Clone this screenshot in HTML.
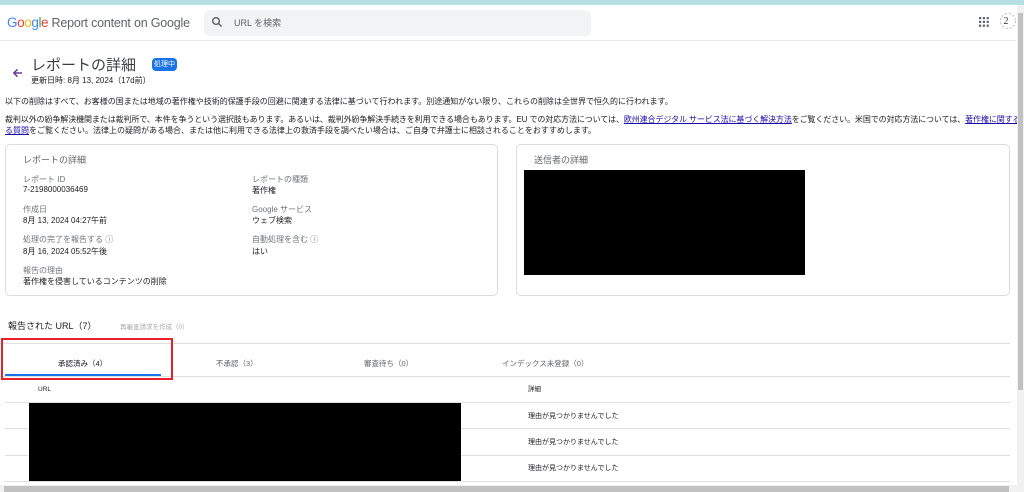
<!DOCTYPE html>
<html><head><meta charset="utf-8"><style>
*{margin:0;padding:0;box-sizing:border-box}
body{width:1024px;height:492px;overflow:hidden;background:#fff;position:relative;font-family:"Liberation Sans","Noto Sans CJK JP",sans-serif;color:#202124}
.a{position:absolute;white-space:nowrap}
.s8{font-size:8px}
.g{color:#5f6368}
.lnk{color:#1a0dab;text-decoration:underline}
.card{position:absolute;border:1px solid #dadce0;border-radius:5px}
.hl{position:absolute;height:1px;background:#e0e0e0}
.lab{font-size:8px;color:#70757a}
.val{font-size:8px;color:#202124}
</style></head><body>
<div class="a" style="left:0;top:0;width:1024px;height:5px;background:#b7dfe3"></div>
<div class="a" style="left:7px;top:15px;font-size:13.5px;letter-spacing:-0.4px"><span style="color:#4285f4">G</span><span style="color:#ea4335">o</span><span style="color:#fbbc05">o</span><span style="color:#4285f4">g</span><span style="color:#34a853">l</span><span style="color:#ea4335">e</span> <span style="color:#5f6368;font-size:12.5px;letter-spacing:-0.2px">Report content on Google</span></div>
<div class="a" style="left:204px;top:10px;width:387px;height:26px;background:#f1f3f4;border-radius:6px"></div>
<svg class="a" style="left:211px;top:16px" width="12" height="12" viewBox="0 0 12 12"><circle cx="5" cy="5" r="3.3" fill="none" stroke="#5f6368" stroke-width="1.4"/><path d="M7.4 7.4L10.5 10.5" stroke="#5f6368" stroke-width="1.5"/></svg>
<div class="a g" style="left:234px;top:16px;font-size:9px">URL を検索</div>
<svg class="a" style="left:979px;top:17px" width="10" height="10" viewBox="0 0 10 10" fill="#5f6368"><rect x="0" y="0" width="2.2" height="2.2"/><rect x="3.8" y="0" width="2.2" height="2.2"/><rect x="7.6" y="0" width="2.2" height="2.2"/><rect x="0" y="3.8" width="2.2" height="2.2"/><rect x="3.8" y="3.8" width="2.2" height="2.2"/><rect x="7.6" y="3.8" width="2.2" height="2.2"/><rect x="0" y="7.6" width="2.2" height="2.2"/><rect x="3.8" y="7.6" width="2.2" height="2.2"/><rect x="7.6" y="7.6" width="2.2" height="2.2"/></svg>
<svg class="a" style="left:999px;top:12px" width="18" height="18" viewBox="0 0 18 18"><circle cx="9" cy="9" r="7.5" fill="none" stroke="#bbb" stroke-width="1" stroke-dasharray="2 2"/><text x="4.5" y="12" font-size="10" font-family="Liberation Serif" fill="#333">2</text></svg>
<div class="hl" style="left:0;top:40px;width:1016px;background:#e8eaed"></div>

<svg class="a" style="left:12px;top:68px" width="11" height="10" viewBox="0 0 11 10"><path d="M10 5H2M5.5 1.3L1.8 5l3.7 3.7" fill="none" stroke="#6a3d9a" stroke-width="1.5"/></svg>
<div class="a" style="left:31px;top:54px;font-size:15px;color:#3c4043">レポートの詳細</div>
<div class="a" style="left:152px;top:58px;width:25px;height:13px;background:#1a73e8;border-radius:4px;color:#fff;font-size:7px;line-height:13px;text-align:center">処理中</div>
<div class="a s8" style="left:31px;top:75px">更新日時: 8月 13, 2024（17d前）</div>

<div class="a s8" style="left:5px;top:96px">以下の削除はすべて、お客様の国または地域の著作権や技術的保護手段の回避に関連する法律に基づいて行われます。別途通知がない限り、これらの削除は全世界で恒久的に行われます。</div>
<div class="a s8" style="left:5px;top:114px;letter-spacing:-0.1px">裁判以外の紛争解決機関または裁判所で、本件を争うという選択肢もあります。あるいは、裁判外紛争解決手続きを利用できる場合もあります。EU での対応方法については、<span class="lnk">欧州連合デジタル サービス法に基づく解決方法</span>をご覧ください。米国での対応方法については、<span class="lnk">著作権に関するよくあ</span></div>
<div class="a s8" style="left:5px;top:125px"><span class="lnk">る質問</span>をご覧ください。法律上の疑問がある場合、または他に利用できる法律上の救済手段を調べたい場合は、ご自身で弁護士に相談されることをおすすめします。</div>

<div class="card" style="left:5px;top:144px;width:493px;height:152px"></div>
<div class="a g" style="left:23px;top:153px;font-size:9px">レポートの詳細</div>
<div class="a lab" style="left:23px;top:174px">レポート ID</div>
<div class="a val" style="left:23px;top:185px">7-2198000036469</div>
<div class="a lab" style="left:23px;top:204px">作成日</div>
<div class="a val" style="left:23px;top:215px">8月 13, 2024 04:27午前</div>
<div class="a lab" style="left:23px;top:234px">処理の完了を報告する ⓘ</div>
<div class="a val" style="left:23px;top:246px">8月 16, 2024 05:52午後</div>
<div class="a lab" style="left:23px;top:265px">報告の理由</div>
<div class="a val" style="left:23px;top:276px">著作権を侵害しているコンテンツの削除</div>
<div class="a lab" style="left:252px;top:174px">レポートの種類</div>
<div class="a val" style="left:252px;top:185px">著作権</div>
<div class="a lab" style="left:252px;top:204px">Google サービス</div>
<div class="a val" style="left:252px;top:215px">ウェブ検索</div>
<div class="a lab" style="left:252px;top:234px">自動処理を含む ⓘ</div>
<div class="a val" style="left:252px;top:246px">はい</div>

<div class="card" style="left:516px;top:144px;width:494px;height:152px"></div>
<div class="a g" style="left:534px;top:153px;font-size:9px">送信者の詳細</div>
<div class="a" style="left:524px;top:170px;width:281px;height:105px;background:#000"></div>

<div class="a" style="left:8px;top:319px;font-size:9px">報告された URL（7）</div>
<div class="a" style="left:120px;top:321px;font-size:6.5px;color:#aaa">再審査請求を作成（0）</div>
<div class="hl" style="left:0;top:343px;width:1010px"></div>
<div class="a" style="left:58px;top:358px;font-size:7.5px">承認済み（4）</div>
<div class="a g" style="left:216px;top:358px;font-size:7.5px">不承認（3）</div>
<div class="a g" style="left:364px;top:358px;font-size:7.5px">審査待ち（0）</div>
<div class="a g" style="left:502px;top:358px;font-size:7.5px">インデックス未登録（0）</div>
<div class="hl" style="left:0;top:376px;width:1010px"></div>
<div class="a" style="left:5px;top:374px;width:156px;height:2px;background:#1a73e8"></div>
<div class="a" style="left:1px;top:338px;width:172px;height:42px;border:2px solid #e8202a"></div>
<div class="a" style="left:38px;top:385px;font-size:6.5px;line-height:10px">URL</div>
<div class="a" style="left:528px;top:385px;font-size:6.5px;line-height:10px">詳細</div>
<div class="hl" style="left:5px;top:402px;width:1005px"></div>
<div class="hl" style="left:5px;top:428px;width:1005px"></div>
<div class="hl" style="left:5px;top:455px;width:1005px"></div>
<div class="hl" style="left:5px;top:481px;width:1005px"></div>
<div class="a" style="left:29px;top:403px;width:432px;height:78px;background:#000"></div>
<div class="a" style="left:528px;top:411px;font-size:7px">理由が見つかりませんでした</div>
<div class="a" style="left:528px;top:437px;font-size:7px">理由が見つかりませんでした</div>
<div class="a" style="left:528px;top:463px;font-size:7px">理由が見つかりませんでした</div>

<div class="a" style="left:1017px;top:5px;width:7px;height:487px;background:#f1f1f1"></div>
<div class="a" style="left:1018px;top:13px;width:5px;height:377px;background:#c1c1c1"></div>
<div class="a" style="left:0;top:485px;width:1017px;height:7px;background:#f1f1f1"></div>
<div class="a" style="left:4px;top:486px;width:1005px;height:6px;background:#c1c1c1"></div>
</body></html>
